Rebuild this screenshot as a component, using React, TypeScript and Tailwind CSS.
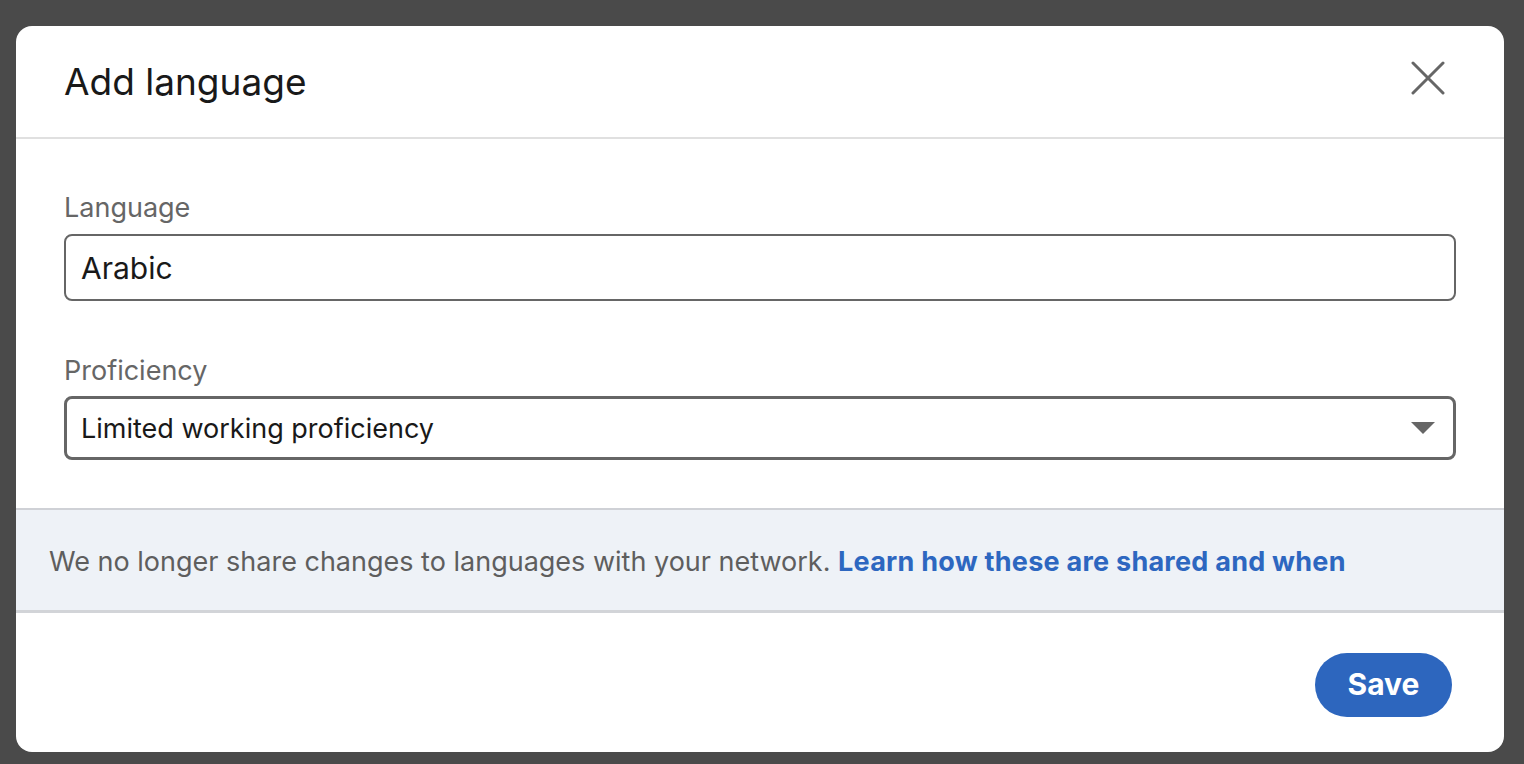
import React from "react";

const FONT = { fontFamily: "Inter, 'Noto Sans', 'Liberation Sans', sans-serif" };

function CloseIcon() {
  return (
    <svg width="34" height="34" viewBox="0 0 34 34" fill="none" stroke="#666666" strokeWidth={3} strokeLinecap="round">
      <path d="M2 2 L32 32 M32 2 L2 32" />
    </svg>
  );
}

function Caret() {
  return (
    <svg width="24" height="12" viewBox="0 0 24 12" fill="#666666">
      <path d="M0 0 H24 L12 12 Z" />
    </svg>
  );
}

export default function App() {
  return (
    <div className="min-h-[764px] bg-[#4a4a4a] pl-[16px] pr-[20px] pt-[26px] pb-[12px]" style={FONT}>
      <div className="flex h-[726px] flex-col overflow-hidden rounded-[16px] bg-white">
        {/* Header */}
        <div className="flex h-[113px] shrink-0 items-center justify-between border-b-2 border-[#e0e0e0] pl-[48px] pr-[59px]">
          <h1 className="text-[37px] font-normal leading-none text-[#191919]">Add language</h1>
          <button className="-mt-[8px] flex items-center justify-center">
            <CloseIcon />
          </button>
        </div>

        {/* Form */}
        <div className="flex flex-col px-[48px] pt-[54px] pb-[48px]">
          <label className="mb-[11px] text-[27px] leading-[30px] text-[#666666]">Language</label>
          <div className="flex h-[67px] items-center rounded-[8px] border-2 border-[#666666] px-[15px]">
            <span className="text-[30px] leading-none text-[#191919]">Arabic</span>
          </div>

          <label className="mt-[55px] mb-[10px] text-[27px] leading-[30px] text-[#666666]">Proficiency</label>
          <div className="flex h-[64px] items-center justify-between rounded-[8px] border-[3px] border-[#666666] pl-[14px] pr-[18px]">
            <span className="text-[27px] leading-none text-[#191919]">Limited working proficiency</span>
            <Caret />
          </div>
        </div>

        {/* Info */}
        <div className="flex h-[105px] shrink-0 items-center border-t-2 border-b-[3px] border-t-[#cfd1d6] border-b-[#d2d4d8] bg-[#eef2f7] pl-[33px] pt-[3px]">
          <p className="text-[27px] leading-none text-[#5e5e5e]">
            We no longer share changes to languages with your network.{" "}
            <a className="font-bold tracking-[0.25px] text-[#2d67c0]">Learn how these are shared and when</a>
          </p>
        </div>

        {/* Footer */}
        <div className="flex flex-1 items-center justify-end pr-[52px] pt-[4px]">
          <button className="h-[64px] w-[137px] rounded-full bg-[#2d66be] text-[30px] font-bold text-white">Save</button>
        </div>
      </div>
    </div>
  );
}
